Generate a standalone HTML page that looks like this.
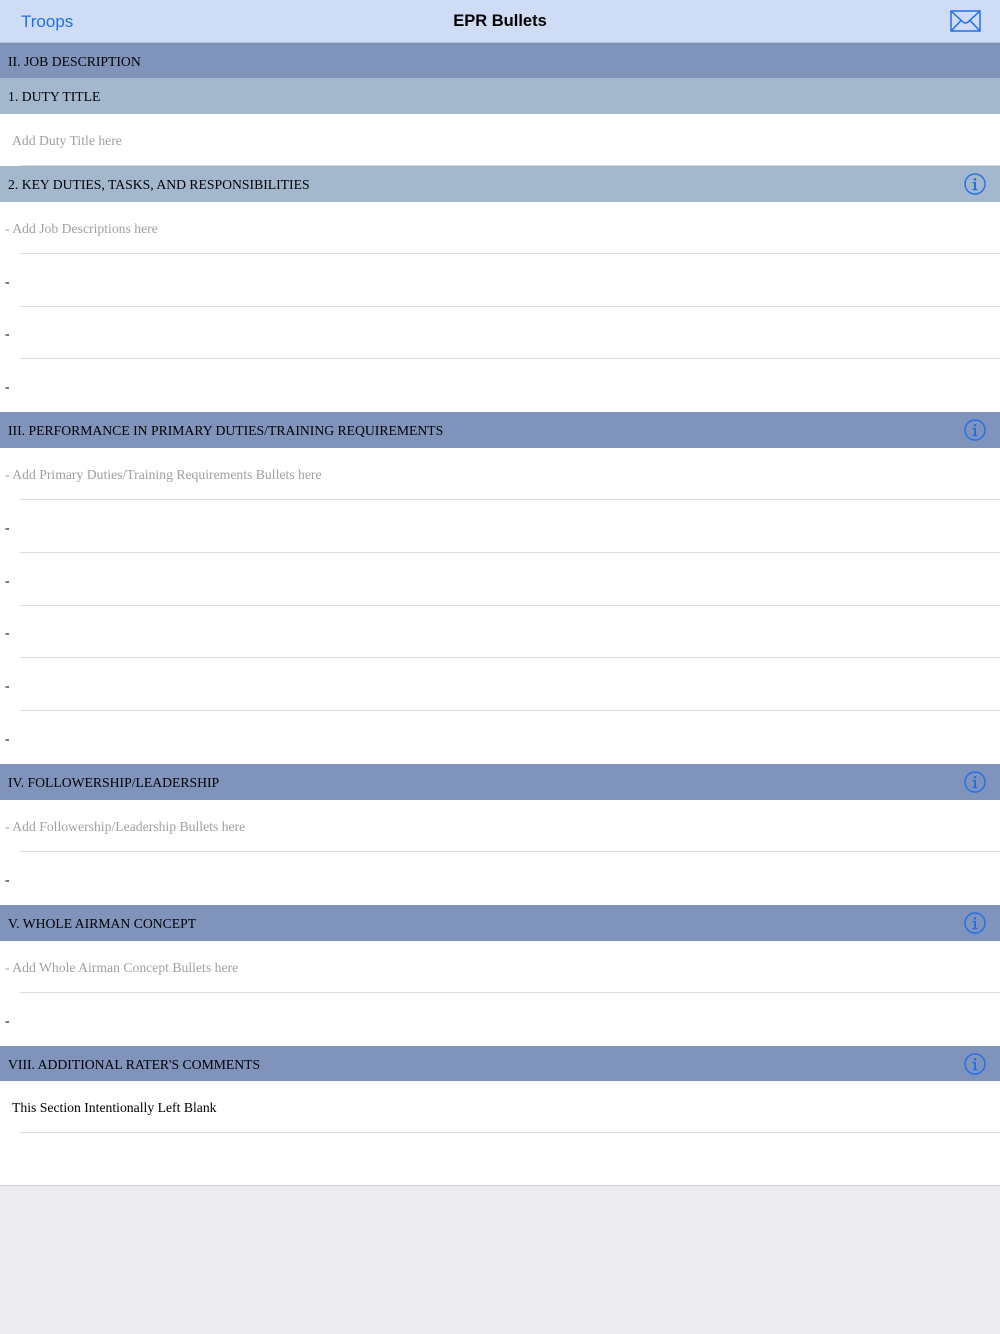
<!DOCTYPE html>
<html><head><meta charset="utf-8"><style>
*{margin:0;padding:0;box-sizing:border-box}
body{width:1000px;height:1334px;background:#ebebf0;position:relative;overflow:hidden;font-family:"Liberation Serif",serif;font-size:13.7px}
.a{position:absolute;left:0;width:1000px}
.nav{top:0;height:43px;background:#cfdcf5;border-bottom:1px solid #b5c0d6}
.h1{background:#7f93bb;color:#000;padding-left:8px;padding-top:2px;display:flex;align-items:center}
.h2{background:#a3b8cc;color:#000;padding-left:8px;padding-top:2px;display:flex;align-items:center}
.r{background:#fff;display:flex;align-items:center;padding-left:5px;padding-top:2px;color:#000}
.r:after{content:"";position:absolute;left:20px;right:0;bottom:0;height:1px;background:#dcdcdc}
.p{color:#a0a0a0}
.i{position:absolute;right:14px;top:50%;margin-top:-11px}
</style></head><body>
<div class="a nav">
<div style="position:absolute;left:21px;top:12px;font-family:'Liberation Sans',sans-serif;font-size:17px;color:#1e6ff0">Troops</div>
<div style="position:absolute;left:0;width:1000px;top:12px;text-align:center;font-family:'Liberation Sans',sans-serif;font-size:16.5px;font-weight:bold">EPR Bullets</div>
<svg style="position:absolute;left:950px;top:10px" width="31" height="22" viewBox="0 0 31 22"><rect x="1" y="1" width="29" height="20" fill="none" stroke="#1e6ff0" stroke-width="1.5"/><path d="M1 1 L13 12 Q15.5 14 18 12 L30 1 M1 21 L11 10.5 M30 21 L20 10.5" fill="none" stroke="#1e6ff0" stroke-width="1.5"/></svg>
</div>
<div id="c"></div>
<script>
var info='<svg class="i" width="22" height="22" viewBox="0 0 22 22"><circle cx="11" cy="11" r="10" fill="none" stroke="#1e6ff0" stroke-width="1.4"/><circle cx="11" cy="6.3" r="1.3" fill="#1e6ff0"/><rect x="10" y="9" width="2" height="8" fill="#1e6ff0"/><rect x="8.5" y="9" width="3" height="1.2" fill="#1e6ff0"/><rect x="8.5" y="16" width="5" height="1.2" fill="#1e6ff0"/></svg>';
var items=[
['h1',43,78,'II. JOB DESCRIPTION',0],
['h2',78,114,'1. DUTY TITLE',0],
['r',114,166,'<span class="p" style="margin-left:7px">Add Duty Title here</span>'],
['h2',166,202,'2. KEY DUTIES, TASKS, AND RESPONSIBILITIES',1],
['r',202,254,'<span class="p">- Add Job Descriptions here</span>'],
['r',254,307,'-'],['r',307,359,'-'],['r',359,412,'-',2],
['h1',412,448,'III. PERFORMANCE IN PRIMARY DUTIES/TRAINING REQUIREMENTS',1],
['r',448,500,'<span class="p">- Add Primary Duties/Training Requirements Bullets here</span>'],
['r',500,553,'-'],['r',553,606,'-'],['r',606,658,'-'],['r',658,711,'-'],['r',711,764,'-',2],
['h1',764,800,'IV. FOLLOWERSHIP/LEADERSHIP',1],
['r',800,852,'<span class="p">- Add Followership/Leadership Bullets here</span>'],
['r',852,905,'-',2],
['h1',905,941,'V. WHOLE AIRMAN CONCEPT',1],
['r',941,993,'<span class="p">- Add Whole Airman Concept Bullets here</span>'],
['r',993,1046,'-',2],
['h1',1046,1081,'VIII. ADDITIONAL RATER\'S COMMENTS',1],
['r',1081,1133,'<span style="margin-left:7px">This Section Intentionally Left Blank</span>'],
['r',1133,1186,'',3]];
var h='';
items.forEach(function(t){
var st='top:'+t[1]+'px;height:'+(t[2]-t[1])+'px';
h+='<div class="a '+t[0]+(t[0]=='r'&&t[4]>=2?' nl':'')+'" style="'+st+'">'+t[3]+(t[0]!='r'&&t[4]?info:'')+'</div>';
});
document.getElementById('c').innerHTML=h+'<style>.nl:after{display:none}.a.r[style*="1133px"]{border-bottom:1px solid #d0d0d4}</style>';
</script>
</body></html>
